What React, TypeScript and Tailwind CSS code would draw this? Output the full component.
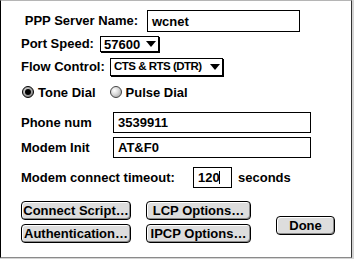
const font = "font-['Liberation_Sans',Arial,sans-serif]";

function TextBox({ value, className }: { value: string; className: string }) {
  return (
    <div className={`flex items-center border border-black bg-white pl-[4px] ${className}`}>
      <span className="whitespace-nowrap text-[13px] font-bold leading-none">{value}</span>
    </div>
  );
}

function Arrow() {
  return (
    <svg width="10" height="6" viewBox="0 0 10 6" className="shrink-0">
      <polygon points="0,0 10,0 5,6" fill="#000" />
    </svg>
  );
}

function Popup({ value, className, textClass }: { value: string; className: string; textClass: string }) {
  return (
    <div
      className={`flex shrink-0 items-center justify-between border border-black bg-white pl-[3px] pr-[2px] shadow-[1px_1px_0_#000] ${className}`}
    >
      <span className={`whitespace-nowrap font-bold leading-none ${textClass}`}>{value}</span>
      <Arrow />
    </div>
  );
}

function Radio({ checked }: { checked?: boolean }) {
  if (checked) {
    return (
      <span className="flex h-[12px] w-[12px] shrink-0 items-center justify-center rounded-full border border-black bg-[radial-gradient(circle_at_40%_40%,#eee_0%,#888_70%,#444_100%)]">
        <span className="h-[6px] w-[6px] rounded-full bg-black" />
      </span>
    );
  }
  return (
    <span className="block h-[12px] w-[12px] shrink-0 rounded-full border border-[#444] bg-[radial-gradient(circle_at_35%_35%,#fff_0%,#ddd_40%,#999_100%)]" />
  );
}

function Button({ label, className }: { label: string; className: string }) {
  return (
    <div
      className={`flex items-center justify-center rounded-[4px] border border-black bg-[#dddddd] shadow-[inset_1px_1px_0_#fff,inset_-1px_-1px_0_#8a8a8a] ${className}`}
    >
      <span className="whitespace-nowrap text-[13px] font-bold leading-none">{label}</span>
    </div>
  );
}

export default function App() {
  return (
    <div className={`h-[259px] w-[354px] bg-[#d4d4d4] text-black ${font}`}>
      <div className="flex h-[258px] w-[352px] flex-col border-b border-l border-r border-t border-b-[#8a8a8a] border-l-black border-r-[#333] border-t-[#b5b5b5] bg-white">
        <div className="mt-[9px] flex h-[22px] items-center">
          <span className="w-[146px] whitespace-nowrap pr-[9px] text-right text-[13px] font-bold">PPP Server Name:</span>
          <TextBox value="wcnet" className="h-[22px] w-[153px]" />
        </div>

        <div className="mt-[4px] flex h-[17px] items-start pl-[20px]">
          <span className="w-[79px] whitespace-nowrap text-[13px] font-bold leading-[16px]">Port Speed:</span>
          <Popup value="57600" className="h-[16px] w-[59px]" textClass="text-[13px]" />
        </div>

        <div className="mt-[5px] flex h-[19px] items-start pl-[20px]">
          <span className="w-[89px] whitespace-nowrap text-[13px] font-bold leading-[18px]">Flow Control:</span>
          <Popup
            value="CTS & RTS (DTR)"
            className="h-[18px] w-[113px]"
            textClass="text-[11.5px] tracking-[-0.5px]"
          />
        </div>

        <div className="mt-[9px] flex h-[12px] items-center pl-[21px]">
          <Radio checked />
          <span className="ml-[4px] whitespace-nowrap text-[13px] font-bold leading-none">Tone Dial</span>
          <span className="ml-[14px] flex">
            <Radio />
          </span>
          <span className="ml-[4px] whitespace-nowrap text-[13px] font-bold leading-none">Pulse Dial</span>
        </div>

        <div className="mt-[14px] flex h-[21px] items-center pl-[20px]">
          <span className="w-[92px] whitespace-nowrap text-[13px] font-bold">Phone num</span>
          <TextBox value="3539911" className="h-[21px] w-[198px]" />
        </div>

        <div className="mt-[4px] flex h-[21px] items-center pl-[20px]">
          <span className="w-[92px] whitespace-nowrap text-[13px] font-bold">Modem Init</span>
          <TextBox value="AT&F0" className="h-[21px] w-[198px]" />
        </div>

        <div className="mt-[9px] flex h-[21px] items-center pl-[20px]">
          <span className="w-[172px] whitespace-nowrap text-[13px] font-bold">Modem connect timeout:</span>
          <div className="flex h-[21px] w-[39px] items-center border border-black bg-white pl-[4px]">
            <span className="text-[13px] font-bold leading-none">120</span>
            <span className="ml-[-1px] h-[13px] w-px bg-black" />
          </div>
          <span className="ml-[6px] whitespace-nowrap text-[13px] font-bold">seconds</span>
        </div>

        <div className="mt-[13px] flex pl-[20px]">
          <div className="grid grid-cols-[110px_105px] gap-x-[15px] gap-y-[4px]">
            <Button label="Connect Script…" className="h-[19px]" />
            <Button label="LCP Options…" className="h-[19px]" />
            <Button label="Authentication…" className="h-[19px]" />
            <Button label="IPCP Options…" className="h-[19px]" />
          </div>
          <Button label="Done" className="ml-[25px] mt-[15px] h-[19px] w-[59px]" />
        </div>
      </div>
    </div>
  );
}
